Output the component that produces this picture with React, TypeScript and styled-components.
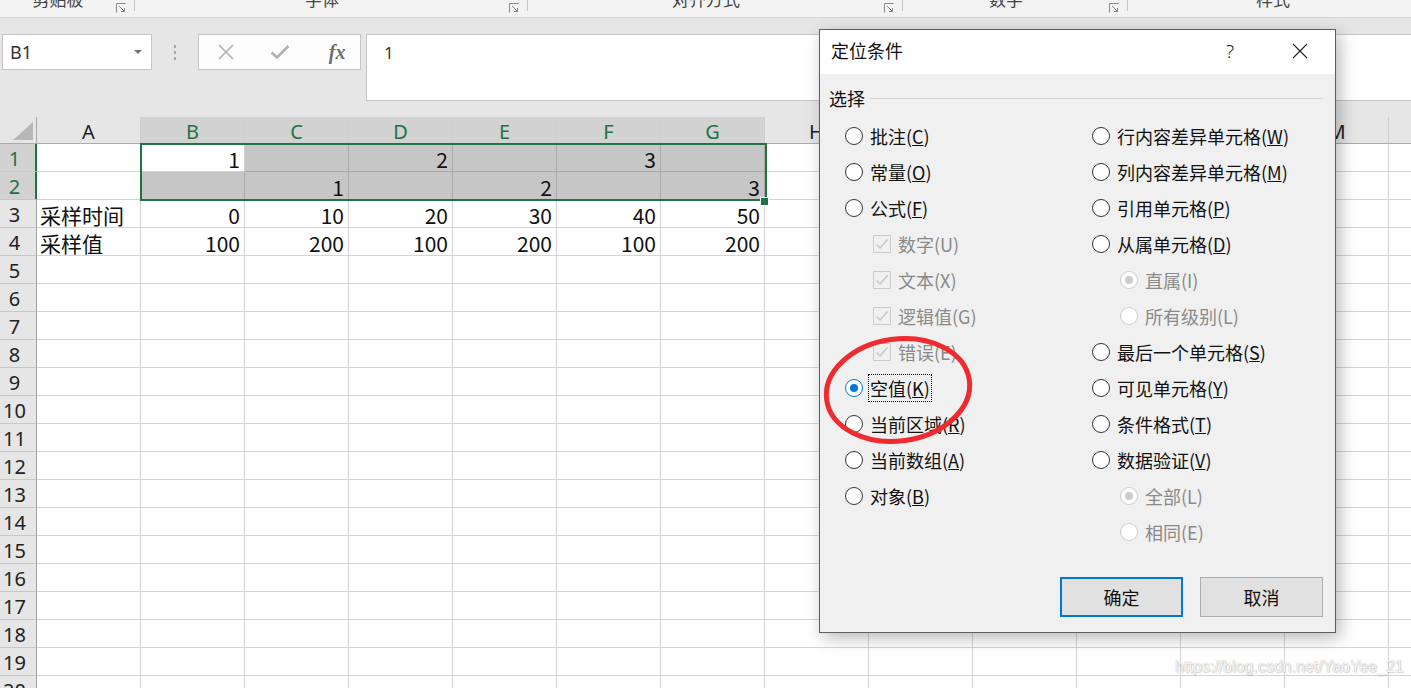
import React from "react";
import styled, { createGlobalStyle } from "styled-components";

const GlobalStyle = createGlobalStyle`
  html, body {
    margin: 0;
    padding: 0;
  }
  body {
    width: 1411px;
    height: 688px;
    overflow: hidden;
    background: #e6e6e6;
    font-family: "Noto Sans CJK SC", "Noto Sans", sans-serif;
  }
`;

const Page = styled.div`
  position: relative;
  width: 1411px;
  height: 688px;
  overflow: hidden;
`;

/* ---------- ribbon group labels (cut off at the top) ---------- */

const RibbonStrip = styled.div`
  display: flex;
  height: 17px;
  background: #f3f3f3;
  border-bottom: 1px solid #d5d5d5;
  overflow: hidden;
`;

const RibbonGroup = styled.div<{ $w: number }>`
  display: flex;
  align-items: flex-start;
  width: ${(p) => p.$w}px;
  flex-shrink: 0;
`;

const GroupLabel = styled.div`
  flex: 1;
  text-align: center;
  font-size: 17px;
  line-height: 22px;
  margin-top: -12px;
  color: #444;
`;

const Launcher = styled.div`
  width: 14px;
  padding-top: 3px;
  margin-right: 4px;
  display: flex;
`;

const GroupSep = styled.div`
  width: 1px;
  height: 11px;
  background: #c6c6c6;
`;

/* ---------- formula bar ---------- */

const FormulaArea = styled.div`
  display: flex;
  align-items: flex-start;
  height: 67px;
  padding: 16px 0 16px 2px;
`;

const NameBox = styled.div`
  width: 150px;
  height: 36px;
  box-sizing: border-box;
  border: 1px solid #c6c6c6;
  background: #fff;
  display: flex;
  align-items: center;
  justify-content: space-between;
  padding: 0 9px 0 7px;
  font-family: "Noto Sans", sans-serif;
  font-size: 18px;
  color: #333;
`;

const DropArrow = styled.span`
  width: 0;
  height: 0;
  border-left: 4px solid transparent;
  border-right: 4px solid transparent;
  border-top: 4px solid #777;
`;

const Grip = styled.div`
  width: 46px;
  height: 36px;
  display: flex;
  flex-direction: column;
  align-items: center;
  justify-content: center;
  gap: 3px;
`;

const GripDot = styled.span`
  width: 2px;
  height: 3px;
  background: #a8a8a8;
`;

const IconBox = styled.div`
  width: 163px;
  height: 36px;
  box-sizing: border-box;
  border: 1px solid #c6c6c6;
  background: #fdfdfd;
  display: flex;
  align-items: center;
`;

const IconSlot = styled.div`
  width: 55px;
  display: flex;
  justify-content: center;
  align-items: center;
`;

const Fx = styled.span`
  font-family: "Liberation Serif", serif;
  font-style: italic;
  font-weight: bold;
  font-size: 20px;
  color: #6f6f6f;
  margin-left: 8px;
`;

const FormulaInput = styled.div`
  flex: 1;
  height: 67px;
  margin-left: 5px;
  box-sizing: border-box;
  border: 1px solid #c6c6c6;
  border-right: none;
  background: #fff;
  padding: 7px 0 0 17px;
  font-family: "Noto Sans", sans-serif;
  font-size: 17px;
  line-height: 22px;
  color: #333;
`;

/* ---------- sheet grid ---------- */

const Sheet = styled.div`
  position: relative;
  background: #fff;
`;

const HeaderRow = styled.div`
  display: flex;
  height: 27px;
  background: #e6e6e6;
`;

const Corner = styled.div`
  position: relative;
  width: 37px;
  flex-shrink: 0;
  box-sizing: border-box;
  border-right: 1px solid #ababab;
  border-bottom: 1px solid #ababab;

  &::after {
    content: "";
    position: absolute;
    right: 3px;
    bottom: 3px;
    border-left: 20px solid transparent;
    border-bottom: 18px solid #b6b6b6;
  }
`;

const ColHeader = styled.div<{ $sel?: boolean }>`
  width: 104px;
  flex-shrink: 0;
  box-sizing: border-box;
  border-right: 1px solid #cdcdcd;
  border-bottom: 1px solid ${(p) => (p.$sel ? "#217346" : "#ababab")};
  background: ${(p) => (p.$sel ? "#d2d2d2" : "#e6e6e6")};
  color: ${(p) => (p.$sel ? "#217346" : "#222")};
  text-align: center;
  font-size: 20px;
  padding-top: 2px;
  line-height: 26px;
  font-family: "Noto Sans", sans-serif;
`;

const Row = styled.div`
  display: flex;
  height: 28px;
`;

const RowHeader = styled.div<{ $sel?: boolean }>`
  width: 37px;
  flex-shrink: 0;
  box-sizing: border-box;
  border-right: 1px solid ${(p) => (p.$sel ? "#217346" : "#9e9e9e")};
  box-shadow: ${(p) => (p.$sel ? "inset -1px 0 0 #217346" : "none")};
  border-bottom: 1px solid #c8c8c8;
  background: ${(p) => (p.$sel ? "#d2d2d2" : "#e6e6e6")};
  color: ${(p) => (p.$sel ? "#217346" : "#222")};
  text-align: center;
  padding: 2px 7px 0 0;
  font-size: 20px;
  line-height: 26px;
  font-family: "Noto Sans", sans-serif;
`;

const Cell = styled.div<{ $sel?: boolean; $active?: boolean; $left?: boolean }>`
  width: 104px;
  flex-shrink: 0;
  box-sizing: border-box;
  border-right: 1px solid ${(p) => (p.$sel && !p.$active ? "#a9a9a9" : "#d4d4d4")};
  border-bottom: 1px solid ${(p) => (p.$sel && !p.$active ? "#a9a9a9" : "#d4d4d4")};
  background: ${(p) => (p.$sel && !p.$active ? "#c6c6c6" : "#fff")};
  text-align: ${(p) => (p.$left ? "left" : "right")};
  padding: 2px 4px 0 3px;
  font-size: 21px;
  line-height: 27px;
  color: #111;
  white-space: nowrap;
  overflow: visible;
`;

const Selection = styled.div`
  position: absolute;
  left: 140px;
  top: 26px;
  width: 627px;
  height: 58px;
  box-sizing: border-box;
  border: 2px solid #217346;
  pointer-events: none;
`;

const FillHandle = styled.div`
  position: absolute;
  left: 760px;
  top: 80px;
  width: 7px;
  height: 7px;
  background: #217346;
  border: 1px solid #fff;
`;

/* ---------- dialog ---------- */

const Dialog = styled.div`
  position: absolute;
  left: 819px;
  top: 29px;
  width: 517px;
  height: 604px;
  box-sizing: border-box;
  border: 1px solid #5f5f5f;
  background: #f0f0f0;
  box-shadow: 4px 5px 16px rgba(0, 0, 0, 0.28);
  display: flex;
  flex-direction: column;
`;

const TitleBar = styled.div`
  height: 44px;
  background: #fff;
  display: flex;
  align-items: center;
  padding-left: 11px;
`;

const Title = styled.div`
  flex: 1;
  font-size: 18px;
  color: #111;
  margin-top: -4px;
`;

const TitleButton = styled.div`
  width: 70px;
  height: 44px;
  display: flex;
  align-items: center;
  justify-content: center;
  margin-top: -3px;
  font-family: "Noto Sans", sans-serif;
  font-weight: 300;
  font-size: 19px;
  color: #222;
`;

const Body = styled.div`
  flex: 1;
  display: flex;
  flex-direction: column;
  padding: 14px 12px 0 9px;
`;

const GroupTitle = styled.div`
  display: flex;
  align-items: center;
  height: 20px;
  font-size: 18px;
  color: #111;

  &::after {
    content: "";
    flex: 1;
    height: 1px;
    margin-left: 5px;
    background: #d6d6d6;
  }
`;

const Options = styled.div`
  display: grid;
  grid-template-columns: 247px 1fr;
  padding-left: 16px;
  margin-top: 10px;
`;

const OptionCol = styled.div`
  display: flex;
  flex-direction: column;
`;

const Option = styled.div<{ $indent?: boolean; $disabled?: boolean }>`
  height: 36px;
  display: flex;
  align-items: center;
  gap: 8px;
  padding-left: ${(p) => (p.$indent ? 28 : 0)}px;
  font-size: 18px;
  color: ${(p) => (p.$disabled ? "#8a8a8a" : "#111")};
  white-space: nowrap;
`;

const Radio = styled.span<{ $checked?: boolean; $disabled?: boolean }>`
  width: 18px;
  height: 18px;
  box-sizing: border-box;
  border-radius: 50%;
  border: 1px solid
    ${(p) => (p.$disabled ? "#cccccc" : p.$checked ? "#0078d7" : "#333")};
  background: #fff;
  display: flex;
  align-items: center;
  justify-content: center;
  flex-shrink: 0;

  &::after {
    content: "";
    display: ${(p) => (p.$checked ? "block" : "none")};
    width: 8px;
    height: 8px;
    border-radius: 50%;
    background: ${(p) => (p.$disabled ? "#cccccc" : "#0078d7")};
  }
`;

const CheckBox = styled.span`
  width: 18px;
  height: 18px;
  box-sizing: border-box;
  border: 1px solid #cccccc;
  display: flex;
  align-items: center;
  justify-content: center;
  flex-shrink: 0;
`;

const LabelText = styled.span<{ $focus?: boolean }>`
  padding: 0 1px;
  margin-left: -2px;
  line-height: 26px;
  outline: ${(p) => (p.$focus ? "1px dotted #000" : "none")};
`;

const Buttons = styled.div`
  display: flex;
  justify-content: flex-end;
  gap: 17px;
  margin-top: 27px;
`;

const Button = styled.div<{ $primary?: boolean }>`
  width: 123px;
  height: 40px;
  box-sizing: border-box;
  border: ${(p) => (p.$primary ? "2px solid #0078d7" : "1px solid #adadad")};
  background: #e1e1e1;
  display: flex;
  align-items: center;
  justify-content: center;
  font-size: 18px;
  color: #111;
`;

/* ---------- overlays ---------- */

const Annotation = styled.svg`
  position: absolute;
  left: 0;
  top: 0;
  pointer-events: none;
`;

const Watermark = styled.div`
  position: absolute;
  left: 1175px;
  top: 658px;
  font-family: "Liberation Sans", Arial, sans-serif;
  font-size: 16px;
  color: rgba(255, 255, 255, 0.9);
  text-shadow: 0 0 1px #a0a0a0, 1px 1px 1px rgba(0, 0, 0, 0.15);
`;

/* ---------- data ---------- */

const columns = ["A", "B", "C", "D", "E", "F", "G", "H", "I", "J", "K", "L", "M", "N"];

const cellData: Record<string, string> = {
  B1: "1",
  D1: "2",
  F1: "3",
  C2: "1",
  E2: "2",
  G2: "3",
  A3: "采样时间",
  B3: "0",
  C3: "10",
  D3: "20",
  E3: "30",
  F3: "40",
  G3: "50",
  A4: "采样值",
  B4: "100",
  C4: "200",
  D4: "100",
  E4: "200",
  F4: "100",
  G4: "200",
};

const selCols = ["B", "C", "D", "E", "F", "G"];

type Opt = {
  kind: "radio" | "check" | "sub";
  label: string;
  checked?: boolean;
  disabled?: boolean;
  focus?: boolean;
};

const leftOptions: Opt[] = [
  { kind: "radio", label: "批注(&C)" },
  { kind: "radio", label: "常量(&O)" },
  { kind: "radio", label: "公式(&F)" },
  { kind: "check", label: "数字(U)", checked: true, disabled: true },
  { kind: "check", label: "文本(X)", checked: true, disabled: true },
  { kind: "check", label: "逻辑值(G)", checked: true, disabled: true },
  { kind: "check", label: "错误(E)", checked: true, disabled: true },
  { kind: "radio", label: "空值(&K)", checked: true, focus: true },
  { kind: "radio", label: "当前区域(&R)" },
  { kind: "radio", label: "当前数组(&A)" },
  { kind: "radio", label: "对象(&B)" },
];

const rightOptions: Opt[] = [
  { kind: "radio", label: "行内容差异单元格(&W)" },
  { kind: "radio", label: "列内容差异单元格(&M)" },
  { kind: "radio", label: "引用单元格(&P)" },
  { kind: "radio", label: "从属单元格(&D)" },
  { kind: "sub", label: "直属(I)", checked: true, disabled: true },
  { kind: "sub", label: "所有级别(L)", disabled: true },
  { kind: "radio", label: "最后一个单元格(&S)" },
  { kind: "radio", label: "可见单元格(&Y)" },
  { kind: "radio", label: "条件格式(&T)" },
  { kind: "radio", label: "数据验证(&V)" },
  { kind: "sub", label: "全部(L)", checked: true, disabled: true },
  { kind: "sub", label: "相同(E)", disabled: true },
];

const ribbonGroups = [
  { label: "剪贴板", w: 135, launcher: true },
  { label: "字体", w: 393, launcher: true },
  { label: "对齐方式", w: 375, launcher: true },
  { label: "数字", w: 225, launcher: true },
  { label: "样式", w: 290, launcher: false },
];

function LauncherIcon() {
  return (
    <svg width="10" height="10" viewBox="0 0 10 10">
      <path d="M0.5 9.5V0.5H9.5" fill="none" stroke="#888" />
      <path d="M3 3L8.5 8.5M8.5 5V8.5H5" fill="none" stroke="#888" />
    </svg>
  );
}

function AccessLabel({ text, focus }: { text: string; focus?: boolean }) {
  const i = text.indexOf("&");
  if (i < 0) return <LabelText>{text}</LabelText>;
  return (
    <LabelText $focus={focus}>
      {text.slice(0, i)}
      <u>{text.charAt(i + 1)}</u>
      {text.slice(i + 2)}
    </LabelText>
  );
}

function OptionRow({ opt }: { opt: Opt }) {
  return (
    <Option $indent={opt.kind !== "radio"} $disabled={opt.disabled}>
      {opt.kind === "check" ? (
        <CheckBox>
          <svg width="14" height="12" viewBox="0 0 14 12">
            <path d="M1.5 6.5L5 10L12.5 1.5" fill="none" stroke="#c4c4c4" strokeWidth="1.4" />
          </svg>
        </CheckBox>
      ) : (
        <Radio $checked={opt.checked} $disabled={opt.disabled} />
      )}
      <AccessLabel text={opt.label} focus={opt.focus} />
    </Option>
  );
}

export default function App() {
  const rows = Array.from({ length: 20 }, (_, i) => i + 1);

  return (
    <>
      <GlobalStyle />
      <Page>
        <RibbonStrip>
          {ribbonGroups.map((g) => (
            <RibbonGroup key={g.label} $w={g.w}>
              <GroupLabel>{g.label}</GroupLabel>
              {g.launcher && (
                <>
                  <Launcher>
                    <LauncherIcon />
                  </Launcher>
                  <GroupSep />
                </>
              )}
            </RibbonGroup>
          ))}
        </RibbonStrip>

        <FormulaArea>
          <NameBox>
            B1
            <DropArrow />
          </NameBox>
          <Grip>
            <GripDot />
            <GripDot />
            <GripDot />
          </Grip>
          <IconBox>
            <IconSlot>
              <svg width="16" height="16" viewBox="0 0 16 16">
                <path d="M1 1L15 15M15 1L1 15" stroke="#b0b0b0" strokeWidth="1.6" />
              </svg>
            </IconSlot>
            <IconSlot>
              <svg width="20" height="16" viewBox="0 0 20 16">
                <path d="M1.5 8.5L7 13.5L18.5 2" fill="none" stroke="#b0b0b0" strokeWidth="2.6" />
              </svg>
            </IconSlot>
            <IconSlot>
              <Fx>fx</Fx>
            </IconSlot>
          </IconBox>
          <FormulaInput>1</FormulaInput>
        </FormulaArea>

        <Sheet>
          <HeaderRow>
            <Corner />
            {columns.map((c) => (
              <ColHeader key={c} $sel={selCols.includes(c)}>
                {c}
              </ColHeader>
            ))}
          </HeaderRow>
          {rows.map((r) => (
            <Row key={r}>
              <RowHeader $sel={r <= 2}>{r}</RowHeader>
              {columns.map((c) => {
                const sel = r <= 2 && selCols.includes(c);
                return (
                  <Cell
                    key={c}
                    $sel={sel}
                    $active={c === "B" && r === 1}
                    $left={c === "A"}
                  >
                    {cellData[`${c}${r}`] ?? ""}
                  </Cell>
                );
              })}
            </Row>
          ))}
          <Selection />
          <FillHandle />
        </Sheet>

        <Dialog>
          <TitleBar>
            <Title>定位条件</Title>
            <TitleButton>?</TitleButton>
            <TitleButton>
              <svg width="16" height="16" viewBox="0 0 16 16">
                <path d="M1 1L15 15M15 1L1 15" stroke="#222" strokeWidth="1.1" />
              </svg>
            </TitleButton>
          </TitleBar>
          <Body>
            <GroupTitle>选择</GroupTitle>
            <Options>
              <OptionCol>
                {leftOptions.map((o) => (
                  <OptionRow key={o.label} opt={o} />
                ))}
              </OptionCol>
              <OptionCol>
                {rightOptions.map((o) => (
                  <OptionRow key={o.label} opt={o} />
                ))}
              </OptionCol>
            </Options>
            <Buttons>
              <Button $primary>确定</Button>
              <Button>取消</Button>
            </Buttons>
          </Body>
        </Dialog>

        <Annotation width="1411" height="688">
          <ellipse
            cx="898"
            cy="390"
            rx="72"
            ry="51"
            transform="rotate(-8 898 390)"
            fill="none"
            stroke="#ef2b30"
            strokeWidth="5"
          />
        </Annotation>

        <Watermark>https://blog.csdn.net/YaoYee_21</Watermark>
      </Page>
    </>
  );
}
